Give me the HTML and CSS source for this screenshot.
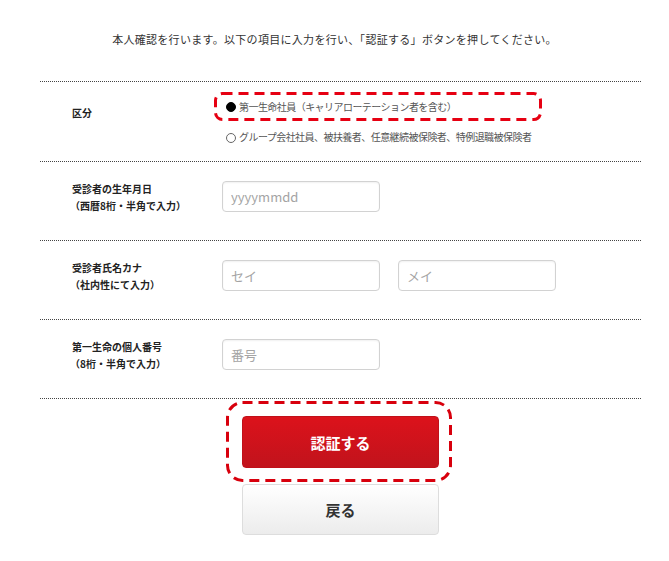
FILE: index.html
```html
<!DOCTYPE html>
<html lang="ja">
<head>
    <meta charset="UTF-8">
    <meta name="viewport" content="width=device-width, initial-scale=1.0">
    <title>本人確認</title>
    <link rel="stylesheet" href="styles.css">
</head>
<body>
    <p class="intro">本人確認を行います。以下の項目に入力を行い、「認証する」ボタンを押してください。</p>

    <div class="form">
        <div class="row row-kubun">
            <div class="row-label">区分</div>
            <div class="row-field radio-group">
                <label class="radio">
                    <span class="radio-dot checked"></span>
                    <span>第一生命社員（キャリアローテーション者を含む）</span>
                    <svg class="mark mark-radio" width="328" height="29" viewBox="0 0 328 29">
                        <rect x="1.5" y="1.5" width="325" height="26" rx="7" ry="7" />
                    </svg>
                </label>
                <label class="radio">
                    <span class="radio-dot"></span>
                    <span>グループ会社社員、被扶養者、任意継続被保険者、特例退職被保険者</span>
                </label>
            </div>
        </div>

        <div class="row row-input">
            <div class="row-label">受診者の生年月日<br><span class="sub">（西暦8桁・半角で入力）</span></div>
            <div class="row-field">
                <input type="text" class="text-input" placeholder="yyyymmdd">
            </div>
        </div>

        <div class="row row-input">
            <div class="row-label">受診者氏名カナ<br><span class="sub">（社内性にて入力）</span></div>
            <div class="row-field">
                <input type="text" class="text-input" placeholder="セイ">
                <input type="text" class="text-input" placeholder="メイ">
            </div>
        </div>

        <div class="row row-input">
            <div class="row-label">第一生命の個人番号<br><span class="sub">（8桁・半角で入力）</span></div>
            <div class="row-field">
                <input type="text" class="text-input" placeholder="番号">
            </div>
        </div>
    </div>

    <div class="actions">
        <div class="btn-wrap">
            <button class="btn btn-primary">認証する</button>
            <svg class="mark mark-button" width="226" height="81" viewBox="0 0 226 81">
                <rect x="1.5" y="1.5" width="223" height="78" rx="15" ry="15" />
            </svg>
        </div>
        <button class="btn btn-back">戻る</button>
    </div>
</body>
</html>
```

FILE: styles.css
```css
* {
    margin: 0;
    padding: 0;
    box-sizing: border-box;
}

body {
    width: 669px;
    font-family: "Noto Sans CJK JP", "Noto Sans", sans-serif;
    color: #333;
    background: #fff;
}

.intro {
    padding-top: 31px;
    line-height: 16px;
    font-size: 11px;
    text-align: center;
    letter-spacing: 0.3px;
    margin-bottom: 34px;
}

.form {
    margin-left: 40px;
    width: 601px;
    border-top: 1px dotted #444;
}

.row {
    display: flex;
    align-items: center;
    height: 79px;
    border-bottom: 1px dotted #444;
}

.row-kubun {
    height: 80px;
}

.row-kubun .row-label {
    padding-bottom: 18px;
}

.row-input {
    padding-bottom: 9px;
}

.row-label {
    width: 182px;
    padding-left: 32px;
    font-size: 10px;
    font-weight: 700;
    line-height: 17px;
    color: #222;
}

.row-label .sub {
    margin-left: -2px;
}

.row-field {
    display: flex;
    gap: 18px;
}

.radio-group {
    flex-direction: column;
    gap: 14px;
}

.radio {
    position: relative;
    display: flex;
    align-items: center;
    gap: 3px;
    font-size: 10px;
    line-height: 16px;
    color: #555;
    letter-spacing: -0.55px;
}

.radio-dot {
    width: 10px;
    height: 10px;
    border-radius: 50%;
    border: 1px solid #666;
    margin-left: 4px;
    margin-top: 3px;
}

.radio-dot.checked {
    background: #000;
    border-color: #000;
    margin-top: 1px;
}

.mark {
    position: absolute;
    pointer-events: none;
    overflow: visible;
}

.mark rect {
    fill: none;
    stroke: #e60012;
    stroke-width: 3;
    stroke-dasharray: 10 6;
}

.mark-radio {
    left: -8px;
    top: -7px;
}

.text-input {
    width: 158px;
    height: 31px;
    border: 1px solid #d2d2d2;
    border-radius: 4px;
    padding: 0 8px;
    font-family: "Noto Sans CJK JP", "Noto Sans", sans-serif;
    font-size: 13px;
    box-shadow: inset 0 1px 2px rgba(0, 0, 0, 0.06);
}

.text-input::placeholder {
    color: #a4a4a4;
}

.actions {
    margin-left: 40px;
    width: 601px;
    display: flex;
    flex-direction: column;
    align-items: center;
    gap: 16px;
    padding-top: 17px;
}

.btn-wrap {
    position: relative;
}

.btn {
    width: 197px;
    height: 52px;
    border-radius: 4px;
    font-family: "Noto Sans CJK JP", "Noto Sans", sans-serif;
    font-size: 15px;
    font-weight: 700;
    cursor: pointer;
    display: block;
}

.btn-primary {
    background: linear-gradient(#dc121b, #c1131c);
    border: 1px solid #c0101a;
    color: #fff;
}

.mark-button {
    left: -16px;
    top: -15px;
}

.mark-button rect {
    stroke: #d8000d;
}

.btn-back {
    height: 51px;
    background: linear-gradient(#ffffff, #ececec);
    border: 1px solid #ddd;
    color: #333;
}
```
